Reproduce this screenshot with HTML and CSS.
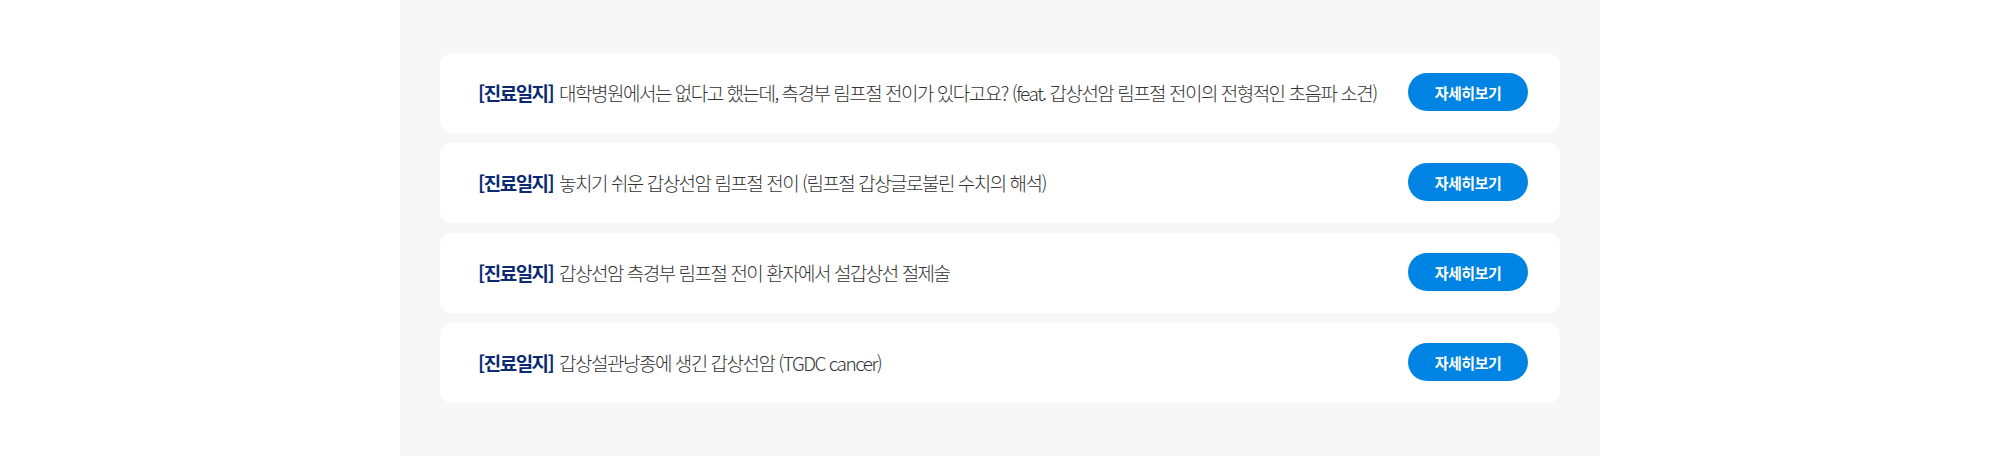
FILE: index.html
```html
<!DOCTYPE html>
<html lang="ko">
<head>
    <meta charset="UTF-8">
    <meta name="viewport" content="width=device-width, initial-scale=1.0">
    <title>진료일지</title>
    <link rel="stylesheet" href="styles.css">
</head>
<body>
    <div class="seccion">
        <ul class="lista">
            <li class="fila">
                <p class="texto"><strong>[진료일지]</strong> 대학병원에서는 없다고 했는데, 측경부 림프절 전이가 있다고요? (feat. 갑상선암 림프절 전이의 전형적인 초음파 소견)</p>
                <a class="boton" href="#">자세히보기</a>
            </li>
            <li class="fila">
                <p class="texto"><strong>[진료일지]</strong> 놓치기 쉬운 갑상선암 림프절 전이 (림프절 갑상글로불린 수치의 해석)</p>
                <a class="boton" href="#">자세히보기</a>
            </li>
            <li class="fila">
                <p class="texto"><strong>[진료일지]</strong> 갑상선암 측경부 림프절 전이 환자에서 설갑상선 절제술</p>
                <a class="boton" href="#">자세히보기</a>
            </li>
            <li class="fila">
                <p class="texto"><strong>[진료일지]</strong> 갑상설관낭종에 생긴 갑상선암 (TGDC cancer)</p>
                <a class="boton" href="#">자세히보기</a>
            </li>
        </ul>
    </div>
</body>
</html>
```

FILE: styles.css
```css
body {
    margin: 0;
    background: #fff;
    font-family: 'Noto Sans CJK KR', 'Noto Sans', sans-serif;
}
.seccion {
    width: 1120px;
    height: 403px;
    margin: 0 auto;
    padding: 53px 40px 0 40px;
    background: #f7f7f7;
}
.lista {
    list-style: none;
    margin: 0;
    padding: 0;
    display: flex;
    flex-direction: column;
    gap: 10px;
}
.fila {
    height: 80px;
    box-sizing: border-box;
    background: #fff;
    border-radius: 12px;
    padding: 0 32px 2px 38px;
    display: flex;
    align-items: center;
    justify-content: space-between;
}
.texto {
    margin: 0;
    font-size: 19px;
    font-weight: 300;
    letter-spacing: -1.5px;
    color: #333;
}
.texto strong {
    color: #0b2a72;
    font-weight: 700;
    margin-right: 2px;
}
.boton {
    width: 120px;
    height: 38px;
    border-radius: 19px;
    background: #0084e3;
    color: #fff;
    font-size: 15px;
    font-weight: 700;
    letter-spacing: -0.5px;
    text-decoration: none;
    display: flex;
    align-items: center;
    justify-content: center;
}
```
